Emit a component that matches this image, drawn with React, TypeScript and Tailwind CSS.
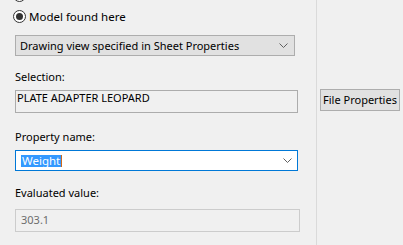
const font = { fontFamily: '"Noto Sans", "Open Sans", sans-serif' };

function Radio({ checked }: { checked?: boolean }) {
  return (
    <span className="w-[13px] h-[13px] rounded-full border border-[#333333] bg-white flex items-center justify-center shrink-0">
      {checked && <span className="w-[7px] h-[7px] rounded-full bg-[#333333]" />}
    </span>
  );
}

function Chevron() {
  return (
    <svg width="9" height="5" viewBox="0 0 9 5" className="shrink-0">
      <path d="M0.5 0.5 L4.5 4.5 L8.5 0.5" fill="none" stroke="#606060" strokeWidth="1" />
    </svg>
  );
}

export default function App() {
  return (
    <div className="w-[403px] h-[245px] bg-[#f0f0f0] flex overflow-hidden text-[11px] text-black" style={font}>
      {/* Left pane */}
      <div className="w-[317px] shrink-0 border-r border-[#dadada] pl-[15px] flex flex-col">
        <div className="-mt-[11px] -ml-[2px]">
          <Radio />
        </div>
        <div className="mt-[8px] -ml-[2px] flex items-center gap-[3px] h-[13px]">
          <Radio checked />
          <span className="leading-[16px] text-[11.5px]">Model found here</span>
        </div>

        <div className="mt-[12px] w-[280px] h-[21px] bg-[#e1e1e1] border border-[#adadad] flex items-center justify-between pl-[4px] pr-[6px]">
          <span className="leading-[16px]">Drawing view specified in Sheet Properties</span>
          <Chevron />
        </div>

        <div className="mt-[13px] leading-[16px] h-[16px]">Selection:</div>
        <div className="mt-[5px] w-[283px] h-[23px] border border-[#acacac] bg-[#f0f0f0] pl-[1px] leading-[14px]">
          PLATE ADAPTER LEOPARD
        </div>

        <div className="mt-[16px] leading-[16px] h-[16px]">Property name:</div>
        <div className="mt-[5px] w-[283px] h-[21px] border border-[#0078d7] bg-white flex items-center justify-between pl-[5px] pr-[5px]">
          <span className="flex items-center">
            <span className="bg-[#3399ff] text-white leading-[12px] h-[12px] px-[1px] text-[11.5px]">Weight</span>
            <span className="w-[1px] h-[12px] bg-[#d06a1a]" />
          </span>
          <Chevron />
        </div>

        <div className="mt-[14px] leading-[16px] h-[16px]">Evaluated value:</div>
        <div className="mt-[8px] w-[285px] h-[23px] border border-[#cccccc] bg-[#f0f0f0] pl-[5px] leading-[20px] text-[#6d6d6d]">
          303.1
        </div>
      </div>

      {/* Right pane */}
      <div className="pl-[3px] pt-[89px]">
        <button className="h-[22px] w-[80px] bg-[#e1e1e1] border border-[#adadad] leading-[18px] text-black whitespace-nowrap px-0">
          File Properties
        </button>
      </div>
    </div>
  );
}
